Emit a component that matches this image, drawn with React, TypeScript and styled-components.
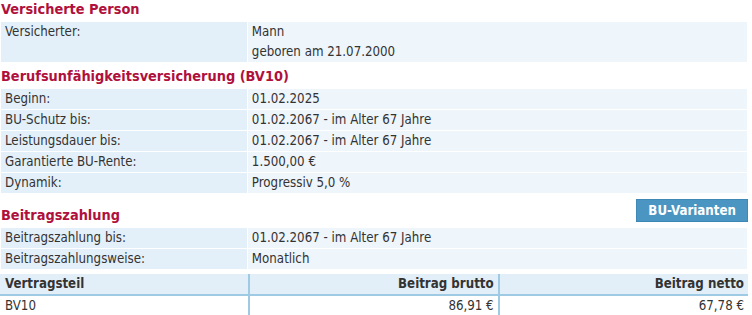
import React from "react";
import styled, { createGlobalStyle } from "styled-components";

const GlobalStyle = createGlobalStyle`
  body {
    margin: 0;
    background: #ffffff;
    font-family: "DejaVu Sans", Verdana, sans-serif;
    font-stretch: condensed;
    font-size: 13.2px;
    color: #333333;
  }
`;

const Page = styled.div`
  width: 748px;
`;

const SectionHead = styled.div<{ $gap: number }>`
  display: flex;
  justify-content: space-between;
  align-items: flex-end;
  margin-top: ${(p) => p.$gap}px;
`;

const Heading = styled.h2`
  margin: 0;
  padding: 1px 0 3px 1px;
  font-size: 14.4px;
  line-height: 17px;
  font-weight: bold;
  color: #b0103c;
`;

const VariantButton = styled.button`
  margin: 0 0 5px 0;
  height: 23px;
  padding: 0 11px;
  border: 1px solid #3f88b5;
  background: #4b95c2;
  color: #ffffff;
  font-family: inherit;
  font-stretch: condensed;
  font-size: 13.2px;
  font-weight: bold;
  cursor: pointer;
`;

const InfoTable = styled.table`
  width: 100%;
  border-spacing: 1px;
  border-collapse: separate;
`;

const Label = styled.td`
  width: 33%;
  padding: 0 4px;
  line-height: 20px;
  background: #e4f0f9;
  vertical-align: top;
`;

const Value = styled.td`
  padding: 0 4px;
  line-height: 20px;
  background: #eef5fb;
  vertical-align: top;
`;

const PremiumTable = styled.table`
  width: 100%;
  margin-top: 4px;
  border-collapse: collapse;
`;

const Th = styled.th<{ $align: "left" | "right"; $first?: boolean }>`
  width: 33.33%;
  padding: 0 4px 0 5px;
  line-height: 20px;
  background: #e3eff8;
  text-align: ${(p) => p.$align};
  font-weight: bold;
  border-bottom: 2px solid #9ecae4;
  border-left: ${(p) => (p.$first ? "none" : "2px solid #9ecae4")};
`;

const Td = styled.td<{ $align: "left" | "right"; $first?: boolean }>`
  padding: 0 4px 0 5px;
  line-height: 19px;
  text-align: ${(p) => p.$align};
  border-bottom: 2px solid #9ecae4;
  border-left: ${(p) => (p.$first ? "none" : "2px solid #9ecae4")};
`;

const coverage = [
  ["Beginn:", "01.02.2025"],
  ["BU-Schutz bis:", "01.02.2067 - im Alter 67 Jahre"],
  ["Leistungsdauer bis:", "01.02.2067 - im Alter 67 Jahre"],
  ["Garantierte BU-Rente:", "1.500,00 €"],
  ["Dynamik:", "Progressiv 5,0 %"],
];

const payment = [
  ["Beitragszahlung bis:", "01.02.2067 - im Alter 67 Jahre"],
  ["Beitragszahlungsweise:", "Monatlich"],
];

export default function App() {
  return (
    <Page>
      <GlobalStyle />
      <SectionHead $gap={0}>
        <Heading>Versicherte Person</Heading>
      </SectionHead>
      <InfoTable>
        <tbody>
          <tr>
            <Label>Versicherter:</Label>
            <Value>
              Mann
              <br />
              geboren am 21.07.2000
            </Value>
          </tr>
        </tbody>
      </InfoTable>

      <SectionHead $gap={4}>
        <Heading>Berufsunfähigkeitsversicherung (BV10)</Heading>
      </SectionHead>
      <InfoTable>
        <tbody>
          {coverage.map(([label, value]) => (
            <tr key={label}>
              <Label>{label}</Label>
              <Value>{value}</Value>
            </tr>
          ))}
        </tbody>
      </InfoTable>

      <SectionHead $gap={5}>
        <Heading>Beitragszahlung</Heading>
        <VariantButton>BU-Varianten</VariantButton>
      </SectionHead>
      <InfoTable>
        <tbody>
          {payment.map(([label, value]) => (
            <tr key={label}>
              <Label>{label}</Label>
              <Value>{value}</Value>
            </tr>
          ))}
        </tbody>
      </InfoTable>

      <PremiumTable>
        <thead>
          <tr>
            <Th $align="left" $first>
              Vertragsteil
            </Th>
            <Th $align="right">Beitrag brutto</Th>
            <Th $align="right">Beitrag netto</Th>
          </tr>
        </thead>
        <tbody>
          <tr>
            <Td $align="left" $first>
              BV10
            </Td>
            <Td $align="right">86,91 €</Td>
            <Td $align="right">67,78 €</Td>
          </tr>
        </tbody>
      </PremiumTable>
    </Page>
  );
}
